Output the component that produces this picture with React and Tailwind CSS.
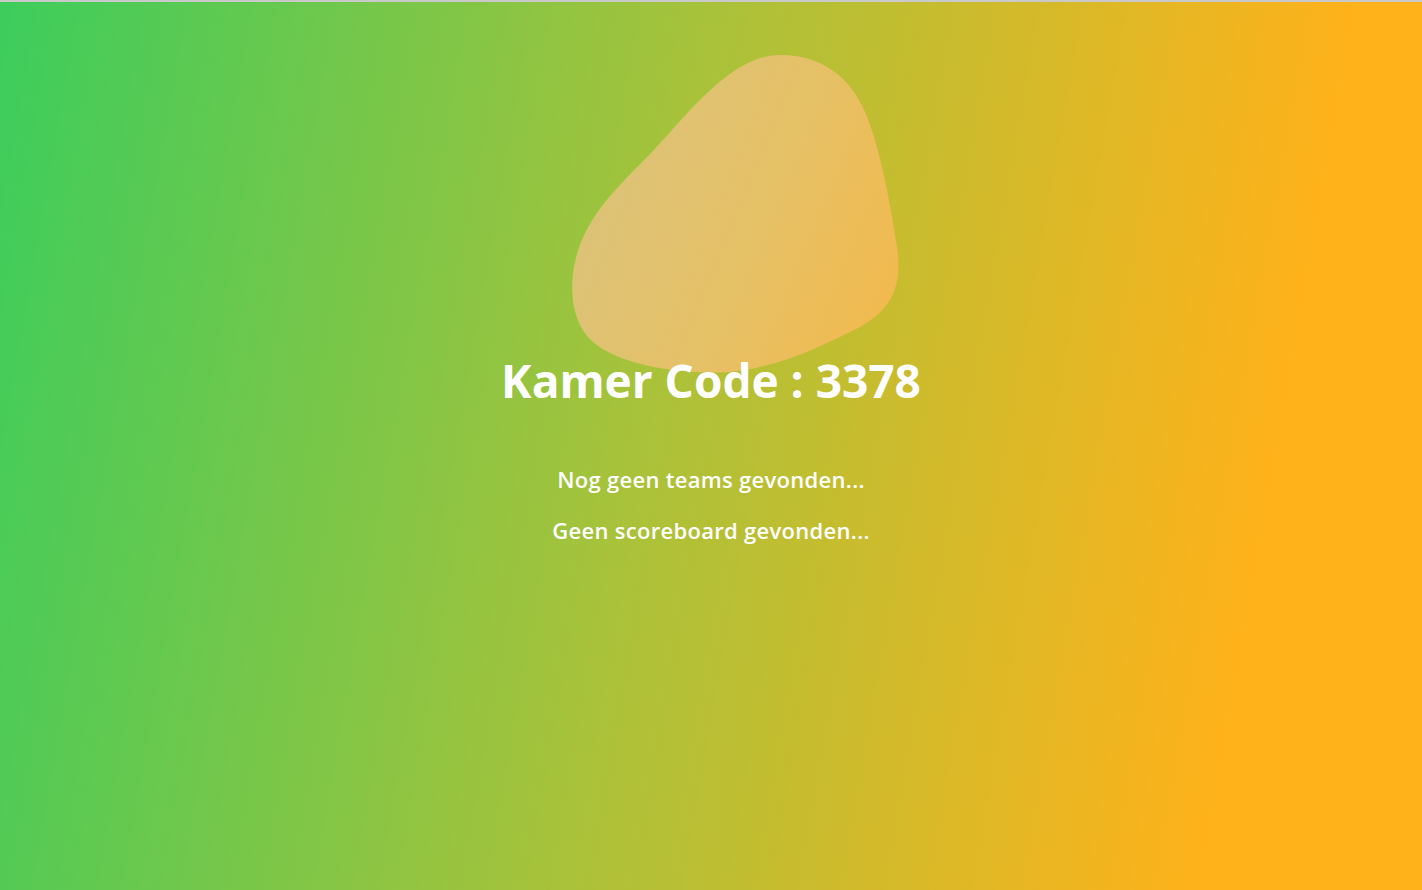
import React from 'react';

function Blob() {
  return (
    <svg
      className="absolute left-[560px] top-[40px]"
      width="350"
      height="340"
      viewBox="0 0 350 340"
      aria-hidden="true"
    >
      <defs>
        <linearGradient id="blobFill" x1="0" y1="0.3" x2="1" y2="0.7">
          <stop offset="0%" stopColor="#dac27b" />
          <stop offset="55%" stopColor="#e5c167" />
          <stop offset="100%" stopColor="#f1ba4f" />
        </linearGradient>
      </defs>
      <path
        d="M220,13 C262,13 290,35 305,70 C320,105 330,160 337,205 C342,240 335,265 300,285 C260,305 220,325 170,330 C110,333 50,320 28,295 C10,275 10,240 15,220 C25,175 55,148 90,112 C125,76 170,13 220,13 Z"
        fill="url(#blobFill)"
      />
    </svg>
  );
}

export default function App() {
  return (
    <div className="min-h-[890px] w-full flex flex-col bg-[linear-gradient(100deg,#3ccd5c_0%,#a8c23a_45%,#ffb21a_86%,#ffb21a_100%)] font-['Open_Sans',sans-serif]">
      <div className="h-[2px] w-full bg-[#c9c9c9]" />
      <main className="relative flex-1 flex flex-col items-center text-white">
        <Blob />
        <h1 className="relative mt-[350px] text-[46px] leading-[56px] font-bold">
          Kamer Code : 3378
        </h1>
        <div className="relative mt-[56px] flex flex-col items-center gap-[21px] text-[22px] leading-[30px] font-semibold tracking-[0.3px]">
          <p>Nog geen teams gevonden...</p>
          <p>Geen scoreboard gevonden...</p>
        </div>
      </main>
    </div>
  );
}
